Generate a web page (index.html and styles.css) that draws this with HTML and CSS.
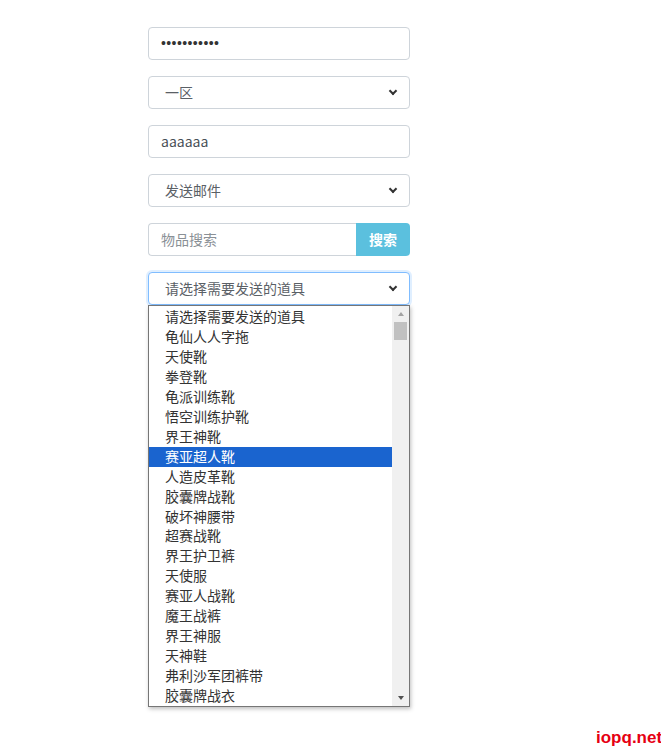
FILE: index.html
```html
<!DOCTYPE html>
<html lang="zh">
<head>
<meta charset="utf-8">
<link rel="stylesheet" href="styles.css">
</head>
<body>
<div class="form">
  <div class="field"><div class="control dots">•••••••••••</div></div>
  <div class="field"><div class="control select"><span class="val">一区</span><span class="chev"></span></div></div>
  <div class="field"><div class="control">aaaaaa</div></div>
  <div class="field"><div class="control select"><span class="val">发送邮件</span><span class="chev"></span></div></div>
  <div class="field group">
    <div class="control grow placeholder">物品搜索</div>
    <div class="btn">搜索</div>
  </div>
  <div class="field dropwrap">
    <div class="control select focus"><span class="val">请选择需要发送的道具</span><span class="chev"></span></div>
    <div class="list">
      <div class="items">
        <div class="item">请选择需要发送的道具</div>
        <div class="item">龟仙人人字拖</div>
        <div class="item">天使靴</div>
        <div class="item">拳登靴</div>
        <div class="item">龟派训练靴</div>
        <div class="item">悟空训练护靴</div>
        <div class="item">界王神靴</div>
        <div class="item sel">赛亚超人靴</div>
        <div class="item">人造皮革靴</div>
        <div class="item">胶囊牌战靴</div>
        <div class="item">破坏神腰带</div>
        <div class="item">超赛战靴</div>
        <div class="item">界王护卫裤</div>
        <div class="item">天使服</div>
        <div class="item">赛亚人战靴</div>
        <div class="item">魔王战裤</div>
        <div class="item">界王神服</div>
        <div class="item">天神鞋</div>
        <div class="item">弗利沙军团裤带</div>
        <div class="item">胶囊牌战衣</div>
      </div>
      <div class="scroll">
        <div class="arrow up"></div>
        <div class="thumb"></div>
        <div class="track"></div>
        <div class="arrow down"></div>
      </div>
    </div>
  </div>
</div>
<div class="mark">iopq.net</div>
</body>
</html>
```
FILE: styles.css
```css
html, body {
  margin: 0;
  padding: 0;
  background: #fff;
  font-family: "Noto Sans CJK SC", "Noto Sans", sans-serif;
}
body {
  width: 661px;
  height: 753px;
  position: relative;
  overflow: hidden;
}
.form {
  padding: 27px 0 0 148px;
  width: 262px;
  display: flex;
  flex-direction: column;
  gap: 16px;
}
.field {
  display: flex;
}
.control {
  box-sizing: border-box;
  width: 262px;
  height: 33px;
  border: 1px solid #ced4da;
  border-radius: 4px;
  padding: 0 12px 2px;
  display: flex;
  align-items: center;
  font-size: 14px;
  color: #495057;
  background: #fff;
}
.dots {
  font-family: "Liberation Sans", Arial, sans-serif;
  font-size: 14px;
  letter-spacing: 0.4px;
  color: #333;
}
.select {
  padding-left: 16px;
  justify-content: space-between;
  color: #5a6066;
}
.chev {
  width: 4px;
  height: 4px;
  border-right: 2px solid #333;
  border-bottom: 2px solid #333;
  transform: rotate(45deg);
  margin: -1px 1px 0 0;
}
.group .grow {
  width: auto;
  flex: 1;
  border-radius: 4px 0 0 4px;
  border-right: none;
}
.placeholder {
  color: #8a9096;
}
.btn {
  width: 54px;
  height: 33px;
  background: #5bc0de;
  color: #fff;
  font-size: 14px;
  font-weight: bold;
  border-radius: 0 4px 4px 0;
  display: flex;
  align-items: center;
  justify-content: center;
  padding-bottom: 2px;
  box-sizing: border-box;
}
.dropwrap {
  position: relative;
}
.focus {
  border-color: #80bdff;
  box-shadow: 0 0 0 2px rgba(0, 123, 255, 0.12);
}
.list {
  position: absolute;
  left: 0;
  top: 33px;
  width: 262px;
  height: 402px;
  box-sizing: border-box;
  border: 1px solid #767676;
  background: #fff;
  display: flex;
  box-shadow: 1px 2px 4px rgba(0, 0, 0, 0.25);
}
.items {
  flex: 1;
  display: flex;
  flex-direction: column;
}
.item {
  height: 20px;
  line-height: 19px;
  font-size: 14px;
  color: #333;
  padding-left: 16px;
  white-space: nowrap;
  box-sizing: border-box;
}
.item:first-child {
  margin-top: 1px;
}
.item.sel {
  background: #1a64cf;
  color: #fff;
}
.scroll {
  width: 17px;
  background: #f0f0f0;
  display: flex;
  flex-direction: column;
  align-items: center;
}
.arrow {
  width: 0;
  height: 0;
  border-left: 3.5px solid transparent;
  border-right: 3.5px solid transparent;
  margin: 6px 0;
}
.arrow.up {
  border-bottom: 4px solid #a3a3a3;
}
.arrow.down {
  border-top: 4px solid #505050;
}
.thumb {
  width: 13px;
  height: 18px;
  background: #c1c1c1;
}
.track {
  flex: 1;
}
.mark {
  position: absolute;
  left: 596px;
  top: 728px;
  color: #e60012;
  font-family: "Liberation Sans", Arial, sans-serif;
  font-weight: bold;
  font-size: 17px;
}
```
